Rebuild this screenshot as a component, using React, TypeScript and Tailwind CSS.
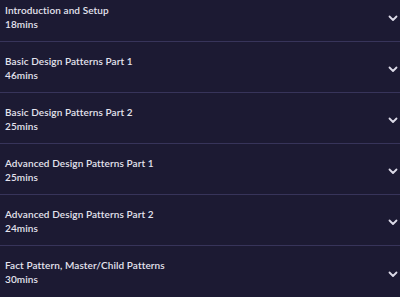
const LESSONS = [
  { title: "Introduction and Setup", length: "18mins" },
  { title: "Basic Design Patterns Part 1", length: "46mins" },
  { title: "Basic Design Patterns Part 2", length: "25mins" },
  { title: "Advanced Design Patterns Part 1", length: "25mins" },
  { title: "Advanced Design Patterns Part 2", length: "24mins" },
  { title: "Fact Pattern, Master/Child Patterns", length: "30mins" },
];

function Chevron() {
  return (
    <svg viewBox="0 0 10 7" className="mt-[5px] h-[7px] w-[10px] text-[#dcdbe8]" fill="none">
      <polyline points="1.5,1.5 5,5 8.5,1.5" stroke="currentColor" strokeWidth="1.8" strokeLinecap="round" strokeLinejoin="round" />
    </svg>
  );
}

export default function App() {
  return (
    <div
      className="h-[297px] w-[400px] overflow-hidden bg-[#1c1a33] text-[#e4e3ee]"
      style={{ fontFamily: "Lato, 'Noto Sans', sans-serif" }}
    >
      <div className="-mt-[9px] flex flex-col">
        {LESSONS.map((lesson, i) => (
          <div
            key={lesson.title}
            className={`flex h-[51px] items-center justify-between pl-[5px] pr-[2px] ${
              i < LESSONS.length - 1 ? "border-b border-[#37345a]" : ""
            }`}
          >
            <div className="flex flex-col pt-[1px]">
              <span className="text-[10px] leading-[14px] font-semibold tracking-[0.1px]">{lesson.title}</span>
              <span className="text-[10px] leading-[14px] font-semibold tracking-[0.1px]">{lesson.length}</span>
            </div>
            <Chevron />
          </div>
        ))}
      </div>
    </div>
  );
}
